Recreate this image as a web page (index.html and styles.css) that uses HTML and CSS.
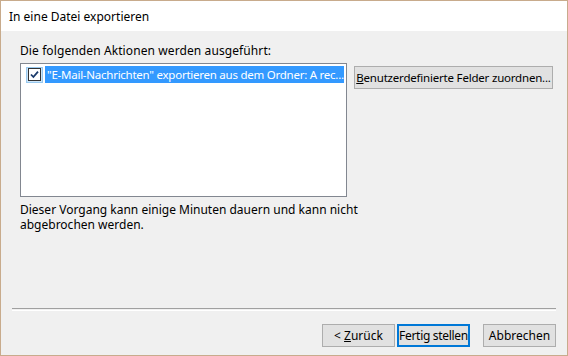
FILE: index.html
```html
<!DOCTYPE html>
<html lang="de">
<head>
    <meta charset="UTF-8">
    <title>In eine Datei exportieren</title>
    <link rel="stylesheet" href="styles.css">
</head>
<body>

<div class="dialog">
    <div class="titlebar">In eine Datei exportieren</div>

    <div class="content">
        <p class="label">Die folgenden Aktionen werden ausgeführt:</p>

        <div class="actions-row">
            <div class="listbox">
                <div class="list-item">
                    <span class="check">
                        <svg width="13" height="13" viewBox="0 0 13 13">
                            <rect x="0.5" y="0.5" width="12" height="12" fill="#fff" stroke="#333"/>
                            <path d="M3 6.5 L5.4 9 L10 3.6" fill="none" stroke="#1a3a6b" stroke-width="1.8"/>
                        </svg>
                    </span>
                    <span class="item-text">"E-Mail-Nachrichten" exportieren aus dem Ordner: A rec...</span>
                </div>
            </div>
            <button class="btn btn-wide"><u>B</u>enutzerdefinierte Felder zuordnen...</button>
        </div>

        <p class="note">Dieser Vorgang kann einige Minuten dauern und kann nicht abgebrochen werden.</p>
    </div>

    <div class="separator"></div>

    <div class="footer">
        <button class="btn">&lt; <u>Z</u>urück</button>
        <button class="btn btn-default">Fertig stellen</button>
        <button class="btn btn-cancel">Abbrechen</button>
    </div>
</div>

</body>
</html>
```

FILE: styles.css
```css
html, body {
    margin: 0;
    padding: 0;
}
body {
    font-family: "Noto Sans", "Open Sans", sans-serif;
    font-size: 12px;
    color: #000;
}
.dialog {
    width: 566px;
    height: 355px;
    border: 1px solid #c8ab8c;
    border-top: none;
    background: #f0f0f0;
    display: flex;
    flex-direction: column;
}
.titlebar {
    height: 31px;
    line-height: 31px;
    padding-left: 8px;
    background: #fff;
    border-top: 1px solid #c8ab8c;
    box-sizing: border-box;
}
.content {
    padding: 12px 0 0 19px;
    height: 277px;
    box-sizing: border-box;
}
.label {
    margin: 0 0 4px 0;
    line-height: 16px;
    letter-spacing: 0.1px;
}
.actions-row {
    display: flex;
    align-items: flex-start;
}
.listbox {
    width: 327px;
    height: 134px;
    background: #fff;
    border: 1px solid #828790;
    padding: 2px;
    box-sizing: border-box;
}
.list-item {
    display: flex;
    align-items: center;
    height: 17px;
}
.check {
    width: 17px;
    height: 16px;
    display: flex;
    align-items: center;
    justify-content: center;
    background: #cce4f7;
    border: 1px solid #99c9ef;
    box-sizing: border-box;
    margin-left: 3px;
    margin-right: 2px;
}
.check svg {
    display: block;
}
.item-text {
    flex: 1;
    background: #3399ff;
    color: #fff;
    height: 17px;
    line-height: 17px;
    padding-left: 2px;
    white-space: nowrap;
    overflow: hidden;
    font-size: 11.5px;
    letter-spacing: -0.25px;
}
.btn {
    font-family: inherit;
    font-size: 12px;
    height: 23px;
    width: 73px;
    padding: 0;
    background: #e1e1e1;
    border: 1px solid #adadad;
    color: #000;
    white-space: nowrap;
}
.btn-wide {
    width: 199px;
    margin-left: 7px;
    margin-top: 3px;
    font-size: 11.5px;
    letter-spacing: -0.2px;
}
.note {
    margin: 5px 0 0 0;
    width: 340px;
    line-height: 15px;
}
.separator {
    margin: 0 11px 0 11px;
    height: 1px;
    border-top: 1px solid #a0a0a0;
    border-bottom: 1px solid #fff;
}
.footer {
    display: flex;
    justify-content: flex-end;
    padding: 13px 11px 0 0;
    gap: 2px;
}
.btn-default {
    border: 2px solid #0078d7;
    letter-spacing: -0.3px;
}
.btn-cancel {
    margin-left: 11px;
}
```
